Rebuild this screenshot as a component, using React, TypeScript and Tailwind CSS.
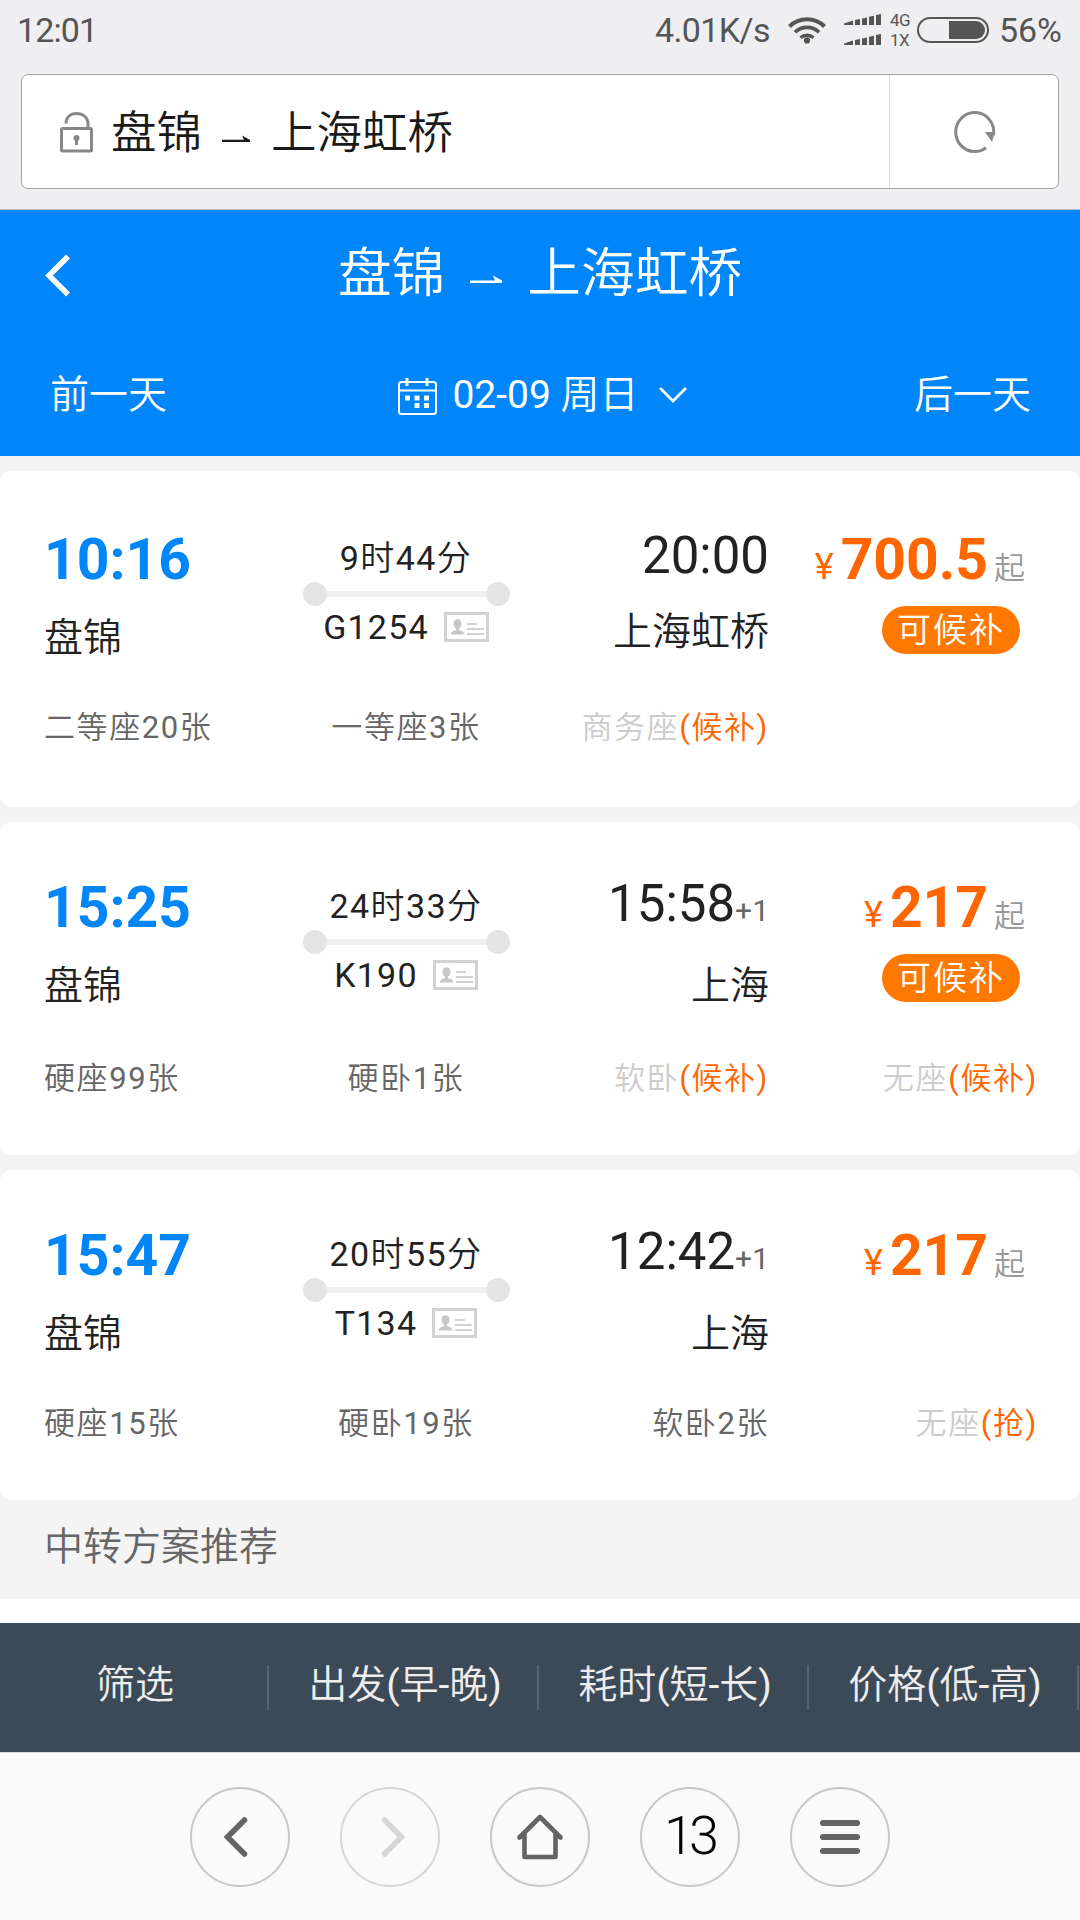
import React from 'react';

interface Seat {
  name: string;
  count?: string;
  action?: string;
}

interface Train {
  code: string;
  depart: string;
  arrive: string;
  dayOffset?: string;
  from: string;
  to: string;
  duration: string;
  price: string;
  waitlist: boolean;
  seats: Seat[];
  cardClass: string;
  bodyClass: string;
}

const trains: Train[] = [
  {
    code: 'G1254',
    depart: '10:16',
    arrive: '20:00',
    from: '盘锦',
    to: '上海虹桥',
    duration: '9时44分',
    price: '700.5',
    waitlist: true,
    seats: [
      { name: '二等座', count: '20张' },
      { name: '一等座', count: '3张' },
      { name: '商务座', action: '(候补)' },
    ],
    cardClass: 'h-[336px] pt-[59px]',
    bodyClass: 'h-[180px]',
  },
  {
    code: 'K190',
    depart: '15:25',
    arrive: '15:58',
    dayOffset: '+1',
    from: '盘锦',
    to: '上海',
    duration: '24时33分',
    price: '217',
    waitlist: true,
    seats: [
      { name: '硬座', count: '99张' },
      { name: '硬卧', count: '1张' },
      { name: '软卧', action: '(候补)' },
      { name: '无座', action: '(候补)' },
    ],
    cardClass: 'h-[333px] pt-[56px]',
    bodyClass: 'h-[183px]',
  },
  {
    code: 'T134',
    depart: '15:47',
    arrive: '12:42',
    dayOffset: '+1',
    from: '盘锦',
    to: '上海',
    duration: '20时55分',
    price: '217',
    waitlist: false,
    seats: [
      { name: '硬座', count: '15张' },
      { name: '硬卧', count: '19张' },
      { name: '软卧', count: '2张' },
      { name: '无座', action: '(抢)' },
    ],
    cardClass: 'h-[330px] pt-[56px]',
    bodyClass: 'h-[180px]',
  },
];

const seatAlign = ['text-left', 'pl-[2px] text-center', '-mr-px text-right', '-mr-[2px] text-right'];

const filters = ['筛选', '出发(早-晚)', '耗时(短-长)', '价格(低-高)'];

function HarpoonArrow({ className }: { className: string }) {
  return (
    <svg viewBox="0 0 32 9" className={className} fill="currentColor">
      <path d="M0 5.400H25L23 0.400L32 5.600V8H0Z" />
    </svg>
  );
}

function SignalBars() {
  return (
    <svg width="38" height="12" viewBox="0 0 38 12" fill="#555">
      <path d="M0 9.500L9 6.500V11H0Z" />
      <path d="M11 6L16 5V11H11Z" />
      <path d="M18 4.400L23 3.400V11H18Z" />
      <path d="M25 2.800L30 1.800V11H25Z" />
      <path d="M32 1L37 0V11H32Z" />
    </svg>
  );
}

function StatusBar() {
  return (
    <div className="flex h-[74px] items-start justify-between pl-[17px] pr-[18px] pt-[10px] text-[34px] leading-[40px] text-[#555]">
      <span className="tracking-[-0.900px]">12:01</span>
      <div className="flex items-start">
        <span className="tracking-[-0.600px]">4.01K/s</span>
        <svg className="ml-[18px] mt-[5px]" width="38" height="29" viewBox="0 0 38 29" fill="none" stroke="#555" strokeWidth="4">
          <path d="M1.500 11.500a25 25 0 0 1 35 0" />
          <path d="M7 17.300a17.200 17.200 0 0 1 24 0" strokeWidth="3.600" />
          <path d="M12.500 22.800a9.600 9.600 0 0 1 13 0" strokeWidth="3.400" />
          <circle cx="19" cy="25.400" r="3.100" fill="#555" stroke="none" />
        </svg>
        <div className="ml-[18px] mt-[4px] flex flex-col gap-[8px]">
          <SignalBars />
          <SignalBars />
        </div>
        <div className="ml-[8px] flex w-[22px] flex-col text-[17px] leading-[20px] tracking-[-0.500px]">
          <span>4G</span>
          <span>1X</span>
        </div>
        <div className="ml-[5px] mt-[7px] flex h-[26px] w-[72px] justify-end rounded-full border-2 border-[#555] p-[2px]">
          <div className="w-[36px] rounded-r-full bg-[#555]" />
        </div>
        <span className="ml-[10px]">56%</span>
      </div>
    </div>
  );
}

function AddressBar() {
  return (
    <div className="mx-[21px] flex h-[115px] rounded-[7px] border border-[#a6a6a6] bg-white">
      <div className="flex flex-1 items-center pl-[38px]">
        <svg width="33" height="42" viewBox="0 0 33 42" fill="none" stroke="#888" strokeWidth="3">
          <path d="M6 12.500C6 6 10.500 2.500 16.500 2.500S28 6 28 13V17" />
          <rect x="1.500" y="17.500" width="30" height="22.500" rx="1" />
          <circle cx="16.500" cy="27" r="3" fill="#888" stroke="none" />
          <path d="M16.500 27V34" />
        </svg>
        <div className="ml-[18px] mt-[5px] flex items-center text-[45.500px] leading-[56px] text-[#1a1a1a]">
          <span>盘锦</span>
          <HarpoonArrow className="ml-[20px] mt-[10px] h-[8px] w-[28px]" />
          <span className="ml-[21px]">上海虹桥</span>
        </div>
      </div>
      <div className="flex w-[169px] items-center justify-center border-l border-[#ddd] pl-[2px]">
        <svg width="42" height="42" viewBox="0 0 42 42" fill="none" stroke="#888" strokeWidth="3">
          <path d="M39.500 24A19 19.500 0 1 0 21 40.500Q28 40.500 32 36.500" />
          <path d="M31 21H41L38 31Z" fill="#888" stroke="none" />
        </svg>
      </div>
    </div>
  );
}

function CalendarIcon() {
  return (
    <svg className="mt-[2px]" width="39" height="37" viewBox="0 0 39 37" fill="none" stroke="#fff" strokeWidth="2">
      <rect x="1" y="4" width="37" height="32" rx="2.500" />
      <path d="M1 12.500H38" />
      <path d="M9 0V8M29 0V8" strokeWidth="3" />
      <g fill="#fff" stroke="none">
        <rect x="7" y="17.500" width="5" height="5" />
        <rect x="16.500" y="17.500" width="5" height="5" />
        <rect x="26" y="17.500" width="5" height="5" />
        <rect x="16.500" y="25" width="5" height="5" />
        <rect x="26" y="25" width="5" height="5" />
      </g>
    </svg>
  );
}

function PageHeader() {
  return (
    <header className="h-[247px] border-t border-[#b4b9c2] bg-[#0086f9] pt-[34px] text-white">
      <div className="grid h-[60px] grid-cols-[170px_1fr_170px] items-center">
        <svg className="ml-[45px] mt-[3px]" width="26" height="43" viewBox="0 0 26 43" fill="none" stroke="#fff" strokeWidth="5.500">
          <path d="M23 2.500L4 21.500L23 40.500" />
        </svg>
        <h1 className="flex items-center justify-center text-[53.700px] font-[350] leading-[60px]">
          <span>盘锦</span>
          <HarpoonArrow className="ml-[25px] mt-[11px] h-[9px] w-[32px]" />
          <span className="ml-[25px]">上海虹桥</span>
        </h1>
      </div>
      <div className="mt-[67px] flex h-[48px] items-center justify-between pl-[50px] pr-[49px] text-[39px] leading-[48px]">
        <span className="font-[350]">前一天</span>
        <div className="ml-[4px] flex items-center">
          <CalendarIcon />
          <span className="ml-[15px]">
            02-09 <span className="font-[350]">周日</span>
          </span>
          <svg className="ml-[20px]" width="28" height="18" viewBox="0 0 28 18" fill="none" stroke="#fff" strokeWidth="2.800">
            <path d="M1 2L14 15L27 2" />
          </svg>
        </div>
        <span className="font-[350]">后一天</span>
      </div>
    </header>
  );
}

function IdCardIcon() {
  return (
    <svg width="45" height="30" viewBox="0 0 45 30" fill="none" stroke="#d2d2d2">
      <rect x="1.500" y="1.500" width="42" height="27" strokeWidth="3" />
      <path d="M23 12H33M23 17H40M23 22H40" strokeWidth="2" />
      <g fill="#c8c8c8" stroke="none">
        <ellipse cx="13.500" cy="12" rx="4" ry="4.800" />
        <path d="M6.500 22.500Q7 19 12 18.200V15H15V18.200Q20 19 20.500 22.500Z" />
      </g>
    </svg>
  );
}

function TrainCard({ train }: { train: Train }) {
  return (
    <section className={`rounded-[12px] bg-white px-[44px] ${train.cardClass}`}>
      <div className={`grid grid-cols-[216px_292px_217px_267px] ${train.bodyClass}`}>
        {/* Departure */}
        <div className="flex flex-col">
          <span className="text-[57px] font-bold leading-[60px] text-[#0086f9]">{train.depart}</span>
          <span className="mt-[24px] text-[39px] font-[350] leading-[48px]">{train.from}</span>
        </div>

        {/* Duration and train code */}
        <div className="flex flex-col items-center text-[34px] leading-[40px] tracking-[1.400px]">
          <span className="mt-[8px]">{train.duration}</span>
          <div className="mt-[4px] flex h-[24px] w-[207px] items-center">
            <span className="size-[24px] rounded-full bg-[#e4e4e4]" />
            <span className="h-[6px] flex-1 bg-[#efefef]" />
            <span className="size-[24px] rounded-full bg-[#e4e4e4]" />
          </div>
          <div className="mt-px flex items-center gap-[15px] tracking-[1.200px]">
            <span>{train.code}</span>
            <IdCardIcon />
          </div>
        </div>

        {/* Arrival */}
        <div className="flex flex-col items-end">
          <div className="flex h-[52px] items-baseline leading-[52px]">
            <span className="text-[51px]">{train.arrive}</span>
            {train.dayOffset && <span className="text-[30px] text-[#666]">{train.dayOffset}</span>}
          </div>
          <span className={`text-[39px] font-[350] leading-[48px] ${train.dayOffset ? 'mt-[32px]' : 'mt-[26px]'}`}>
            {train.to}
          </span>
        </div>

        {/* Price */}
        <div className="flex flex-col items-end">
          <div className="flex h-[60px] items-baseline pr-[11px] leading-[60px]">
            <span className="text-[36px] text-[#ff6600]">¥</span>
            <span className="ml-[7px] text-[57px] font-bold text-[#ff6600]">{train.price}</span>
            <span className="ml-[6px] text-[31px] text-[#999]">起</span>
          </div>
          {train.waitlist && (
            <span className="mr-[16px] mt-[16px] h-[48px] w-[138px] rounded-full bg-[#ff7800] pl-[15px] text-[34px] leading-[48px] tracking-[2px] text-white">
              可候补
            </span>
          )}
        </div>
      </div>

      <div className="grid grid-cols-[216px_290px_218px_268px] text-[31px] leading-[36px] tracking-[1.600px] text-[#666]">
        {train.seats.map((seat, i) => (
          <div key={seat.name} className={seatAlign[i]}>
            <span className={seat.action ? 'text-[#ccc]' : ''}>{seat.name}</span>
            {seat.count}
            {seat.action && <span className="text-[#ff6600]">{seat.action}</span>}
          </div>
        ))}
      </div>
    </section>
  );
}

function FilterBar() {
  return (
    <div className="flex h-[129px] bg-[#3c4a57] text-[39px] leading-[48px] text-[#eee]">
      {filters.map((label) => (
        <div key={label} className="flex w-[270px] items-center">
          <span className="mb-[6px] flex-1 pl-[3px] text-center">{label}</span>
          <span className="mr-px h-[45px] w-[2px] bg-[#566470]" />
        </div>
      ))}
    </div>
  );
}

function NavButton({ dim, children }: { dim?: boolean; children: React.ReactNode }) {
  return (
    <button
      className={`flex size-[100px] items-center justify-center rounded-full border-2 ${dim ? 'border-[#d6d6d6] text-[#d6d6d6]' : 'border-[#c8c8c8] text-[#646464]'}`}
    >
      {children}
    </button>
  );
}

function BrowserNav() {
  return (
    <nav className="flex h-[168px] justify-center gap-[50px] border-t border-[#d8dadc] bg-[#fafafa] pt-[34px]">
      <NavButton>
        <svg className="mr-[10px]" width="26" height="42" viewBox="0 0 26 42" fill="none" stroke="currentColor" strokeWidth="5.500" strokeLinecap="round">
          <path d="M22.500 4L5.500 21L22.500 38" />
        </svg>
      </NavButton>
      <NavButton dim>
        <svg className="ml-[8px]" width="26" height="42" viewBox="0 0 26 42" fill="none" stroke="currentColor" strokeWidth="5.500" strokeLinecap="round">
          <path d="M3.500 4L20.500 21L3.500 38" />
        </svg>
      </NavButton>
      <NavButton>
        <svg width="48" height="46" viewBox="0 0 48 46" fill="none" stroke="currentColor" strokeWidth="4.600" strokeLinecap="round" strokeLinejoin="round">
          <path d="M3.500 23.500L24 3L44.500 23.500M8.500 19V43H39.500V19" />
        </svg>
      </NavButton>
      <NavButton>
        <span className="mb-[3px] mr-[2px] text-[54px] font-light leading-none tracking-[-5px] text-black">13</span>
      </NavButton>
      <NavButton>
        <svg width="40" height="36" viewBox="0 0 40 36" fill="none" stroke="currentColor" strokeWidth="6" strokeLinecap="round">
          <path d="M3 4H37M3 18H37M3 32H37" />
        </svg>
      </NavButton>
    </nav>
  );
}

export default function App() {
  return (
    <div className="flex h-[1920px] w-[1080px] flex-col overflow-hidden bg-white font-[Roboto,'Noto_Sans_CJK_SC_DemiLight','Noto_Sans_CJK_SC',sans-serif] text-[#222]">
      <div className="h-[209px] bg-[#efeff1]">
        <StatusBar />
        <AddressBar />
      </div>
      <PageHeader />
      <main className="flex h-[1143px] flex-col gap-[15px] bg-[#f4f4f4] pt-[15px]">
        {trains.map((train) => (
          <TrainCard key={train.code} train={train} />
        ))}
        <h2 className="mt-[8px] pl-[44px] text-[39px] font-[350] leading-[48px] text-[#666]">中转方案推荐</h2>
      </main>
      <div className="h-[24px] bg-white" />
      <FilterBar />
      <BrowserNav />
    </div>
  );
}
